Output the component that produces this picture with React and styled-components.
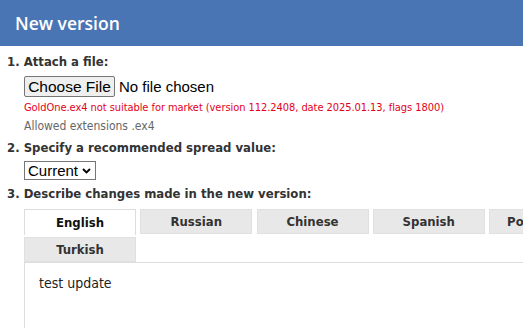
import React from "react";
import styled, { createGlobalStyle } from "styled-components";

const GlobalStyle = createGlobalStyle`
  html, body {
    margin: 0;
    padding: 0;
    background: #fff;
  }
  body {
    width: 523px;
    height: 328px;
    overflow: hidden;
    font-family: "DejaVu Sans Condensed", "DejaVu Sans", sans-serif;
    color: #333;
  }
`;

const Page = styled.div`
  width: 523px;
  height: 328px;
  overflow: hidden;
`;

const Header = styled.header`
  height: 46px;
  background: #4a75b4;
  display: flex;
  align-items: center;
  padding: 0 15px;
  box-sizing: border-box;
  h1 {
    margin: 0;
    font-family: "Open Sans", sans-serif;
    font-weight: 600;
    font-size: 17.5px;
    color: #fff;
  }
`;

const Form = styled.div`
  padding: 7px 0 0 7px;
`;

const Step = styled.div`
  font-weight: bold;
  font-size: 13px;
  line-height: 16px;
  color: #333;
  margin: ${(p) => p.$top || 0}px 0 0;
`;

const Indent = styled.div`
  padding-left: 17px;
`;

const FileRow = styled.div`
  display: flex;
  align-items: center;
  margin-top: 6px;
  font-family: Arial, "Liberation Sans", sans-serif;
  font-size: 15px;
  color: #000;
`;

const FileButton = styled.button`
  width: 91px;
  height: 21px;
  padding: 0;
  background: #efefef;
  border: 1px solid #767676;
  border-radius: 2px;
  font-family: Arial, "Liberation Sans", sans-serif;
  font-size: 15.5px;
  color: #000;
  margin-right: 4px;
`;

const Note = styled.div`
  font-size: ${(p) => (p.$error ? 11 : 12)}px;
  letter-spacing: ${(p) => (p.$error ? "-0.06px" : "0")};
  line-height: 14px;
  color: ${(p) => (p.$error ? "#e4001b" : "#666")};
  margin-top: ${(p) => p.$top || 0}px;
`;

const Select = styled.div`
  display: inline-flex;
  align-items: center;
  gap: 4px;
  height: 19px;
  box-sizing: border-box;
  margin-top: 5px;
  padding: 0 4px 0 3px;
  border: 1px solid #767676;
  font-family: Arial, "Liberation Sans", sans-serif;
  font-size: 15px;
  color: #000;
`;

const TabArea = styled.div`
  margin-top: 7px;
`;

const Tabs = styled.div`
  display: flex;
  flex-wrap: wrap;
  column-gap: 4.25px;
  row-gap: 2px;
  width: 600px;
`;

const Tab = styled.div`
  width: 112px;
  height: ${(p) => (p.$active ? 26 : 25)}px;
  box-sizing: border-box;
  display: flex;
  align-items: center;
  justify-content: center;
  font-weight: bold;
  font-size: 13px;
  color: ${(p) => (p.$active ? "#111" : "#333")};
  background: ${(p) => (p.$active ? "#fff" : "#e8e8e8")};
  border: 1px solid ${(p) => (p.$active ? "#ddd" : "#e0e0e0")};
  border-bottom: ${(p) => (p.$active ? "none" : "1px solid #e0e0e0")};
`;

const Editor = styled.div`
  border-top: 1px solid #ddd;
  border-left: 1px solid #ddd;
  height: 80px;
  padding: 12px 14px;
  font-size: 14px;
  color: #222;
  width: 600px;
`;

const langs = ["English", "Russian", "Chinese", "Spanish", "Portuguese", "Turkish"];

export default function App() {
  return (
    <Page>
      <GlobalStyle />
      <Header>
        <h1>New version</h1>
      </Header>
      <Form>
        <Step $top={1}>1. Attach a file:</Step>
        <Indent>
          <FileRow>
            <FileButton>Choose File</FileButton>
            <span>No file chosen</span>
          </FileRow>
          <Note $error $top={4}>
            GoldOne.ex4 not suitable for market (version 112.2408, date 2025.01.13, flags 1800)
          </Note>
          <Note $top={4}>Allowed extensions .ex4</Note>
        </Indent>
        <Step $top={7}>2. Specify a recommended spread value:</Step>
        <Indent>
          <Select>
            Current
            <svg width="9" height="6" viewBox="0 0 9 6">
              <path d="M1 1 L4.5 4.5 L8 1" fill="none" stroke="#000" strokeWidth="1.8" />
            </svg>
          </Select>
        </Indent>
        <Step $top={6}>3. Describe changes made in the new version:</Step>
        <Indent>
          <TabArea>
            <Tabs>
              {langs.map((l, i) => (
                <Tab key={l} $active={i === 0}>
                  {l}
                </Tab>
              ))}
            </Tabs>
            <Editor>test update</Editor>
          </TabArea>
        </Indent>
      </Form>
    </Page>
  );
}
